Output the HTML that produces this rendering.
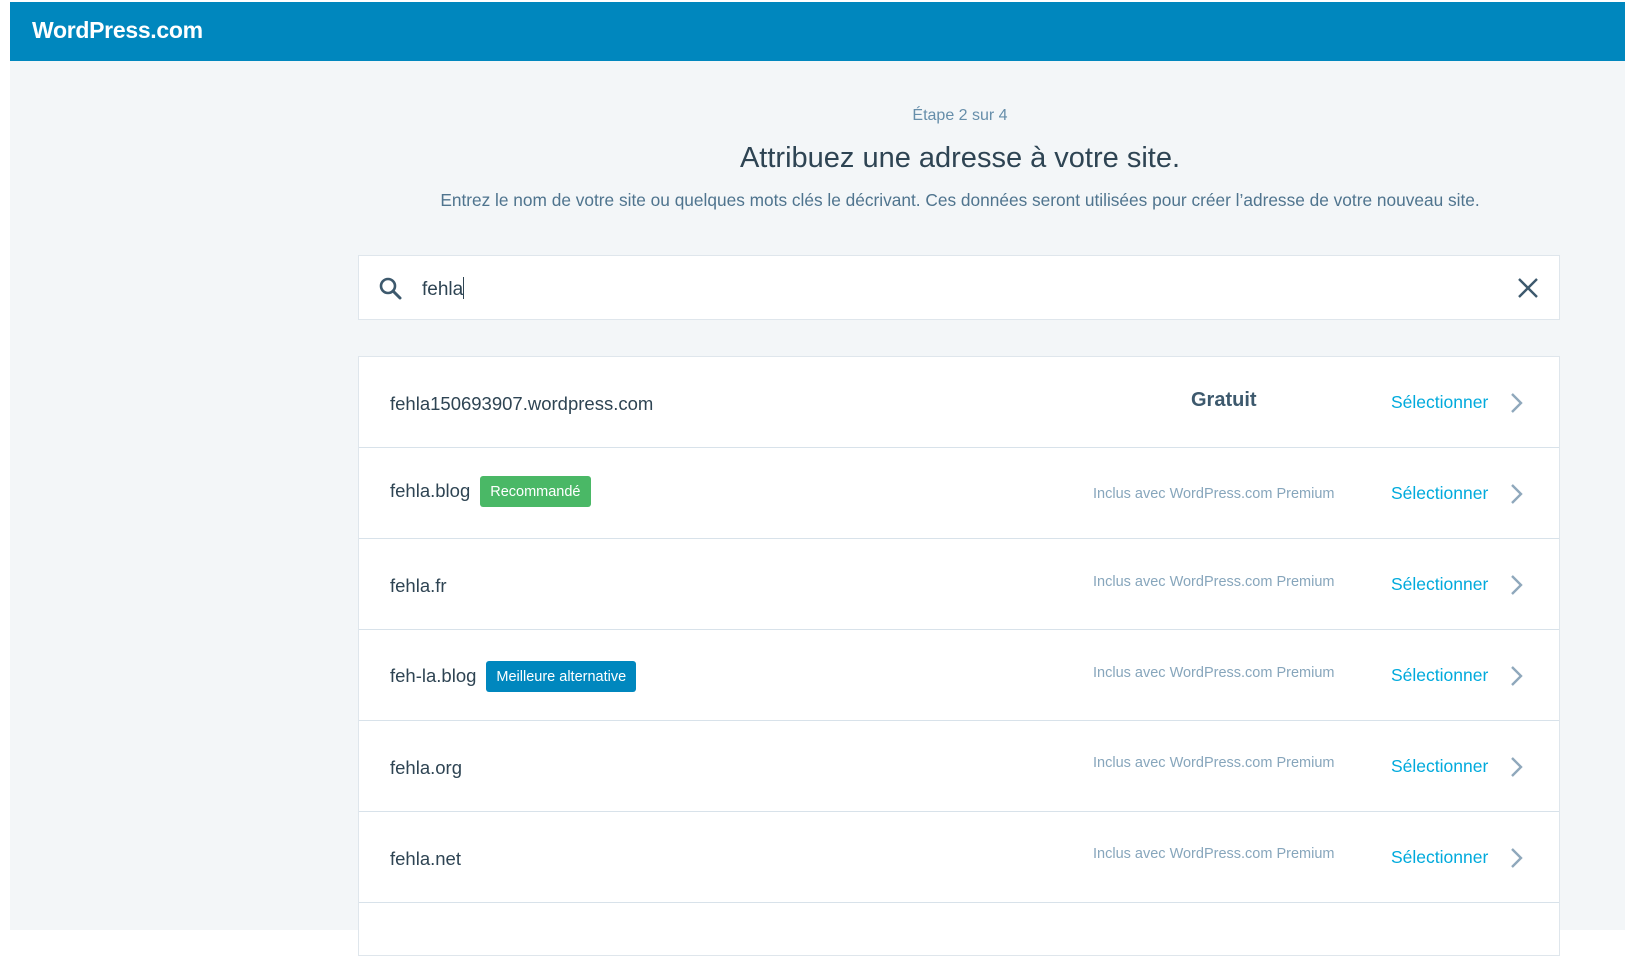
<!DOCTYPE html>
<html><head><meta charset="utf-8"><style>
*{margin:0;padding:0;box-sizing:border-box}
body{width:1625px;height:930px;overflow:hidden;background:#fff;font-family:"Liberation Sans",sans-serif;position:relative}
.bg{position:absolute;left:10px;top:2px;width:1615px;height:928px;background:#f3f6f8}
.hdr{position:absolute;left:10px;top:2px;width:1615px;height:59px;background:#0087be}
.hdr span{position:absolute;left:22px;top:15px;color:#fff;font-size:23px;font-weight:bold;letter-spacing:-0.3px}
.c{position:absolute;left:0;width:1920px;text-align:center}
.step{top:107px;left:360px;width:1200px;font-size:16px;color:#668eaa}
.h1{top:142px;left:360px;width:1200px;font-size:29px;color:#2e4453}
.sub{top:190px;left:260px;width:1400px;font-size:17.3px;color:#4f748e}
.search{position:absolute;left:358px;top:255px;width:1202px;height:65px;background:#fff;border:1px solid #dfe6ec}
.search .t{position:absolute;left:63px;top:21px;font-size:19px;color:#2e4453}
.search .t i{display:inline-block;width:1px;height:22px;background:#2e4453;vertical-align:-4px}
.list{position:absolute;left:358px;top:356px;width:1202px;height:600px;background:#fff;border:1px solid #dfe6ec}
.row{position:absolute;left:0;width:1200px;height:91px;border-bottom:1px solid #d8e2ea}
.dom{position:absolute;left:31px;font-size:18.5px;color:#2e4453;top:36px}
.badge{display:inline-block;color:#fff;font-size:14.5px;padding:8px 10px 7px;border-radius:3px;margin-left:10px;vertical-align:1px}
.price{position:absolute;left:734px;width:260px;font-size:14.5px;color:#87a6bc;top:38px}
.grat{position:absolute;left:832px;top:32px;font-size:20px;font-weight:bold;color:#3d596d}
.sel{position:absolute;left:1032px;top:35px;font-size:17.5px;color:#00aadc}
.chev{position:absolute;left:1151px;top:35px}
</style></head><body>
<div class="bg"></div>
<div class="hdr"><span>WordPress.com</span></div>
<div class="c step">Étape 2 sur 4</div>
<div class="c h1">Attribuez une adresse à votre site.</div>
<div class="c sub">Entrez le nom de votre site ou quelques mots clés le décrivant. Ces données seront utilisées pour créer l’adresse de votre nouveau site.</div>
<div class="search">
<svg style="position:absolute;left:19px;top:20px" width="26" height="26" viewBox="0 0 26 26"><circle cx="10" cy="10" r="7" fill="none" stroke="#3d596d" stroke-width="2.6"/><line x1="15" y1="15" x2="22" y2="22" stroke="#3d596d" stroke-width="3" stroke-linecap="round"/></svg>
<div class="t">fehla<i></i></div>
<svg style="position:absolute;left:1158px;top:21px" width="22" height="22" viewBox="0 0 22 22"><path d="M2 2L20 20M20 2L2 20" stroke="#3d596d" stroke-width="2.4"/></svg>
</div>
<div class="list">
<div class="row" style="top:0;height:91px"><div class="dom">fehla150693907.wordpress.com</div><div class="grat">Gratuit</div><div class="sel">Sélectionner</div><svg class="chev" width="14" height="22" viewBox="0 0 14 22"><path d="M2 2l9 9-9 9" fill="none" stroke="#8fa8bc" stroke-width="2.4"/></svg></div>
<div class="row" style="top:91px"><div class="dom" style="top:28px">fehla.blog<span class="badge" style="background:#4ab866">Recommandé</span></div><div class="price">Inclus avec WordPress.com Premium</div><div class="sel">Sélectionner</div><svg class="chev" width="14" height="22" viewBox="0 0 14 22"><path d="M2 2l9 9-9 9" fill="none" stroke="#8fa8bc" stroke-width="2.4"/></svg></div>
<div class="row" style="top:182px"><div class="dom">fehla.fr</div><div class="price" style="top:35px">Inclus avec WordPress.com Premium</div><div class="sel">Sélectionner</div><svg class="chev" width="14" height="22" viewBox="0 0 14 22"><path d="M2 2l9 9-9 9" fill="none" stroke="#8fa8bc" stroke-width="2.4"/></svg></div>
<div class="row" style="top:273px"><div class="dom" style="top:31px">feh-la.blog<span class="badge" style="background:#0087be">Meilleure alternative</span></div><div class="price" style="top:35px">Inclus avec WordPress.com Premium</div><div class="sel">Sélectionner</div><svg class="chev" width="14" height="22" viewBox="0 0 14 22"><path d="M2 2l9 9-9 9" fill="none" stroke="#8fa8bc" stroke-width="2.4"/></svg></div>
<div class="row" style="top:364px"><div class="dom">fehla.org</div><div class="price" style="top:34px">Inclus avec WordPress.com Premium</div><div class="sel">Sélectionner</div><svg class="chev" width="14" height="22" viewBox="0 0 14 22"><path d="M2 2l9 9-9 9" fill="none" stroke="#8fa8bc" stroke-width="2.4"/></svg></div>
<div class="row" style="top:455px"><div class="dom">fehla.net</div><div class="price" style="top:34px">Inclus avec WordPress.com Premium</div><div class="sel">Sélectionner</div><svg class="chev" width="14" height="22" viewBox="0 0 14 22"><path d="M2 2l9 9-9 9" fill="none" stroke="#8fa8bc" stroke-width="2.4"/></svg></div>
</div>
</body></html>
